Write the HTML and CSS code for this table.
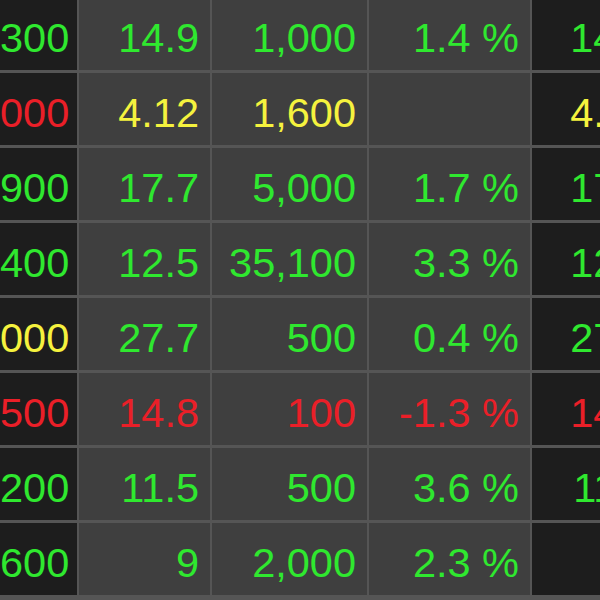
FILE: index.html
```html
<!DOCTYPE html>
<html>
<head>
<meta charset="utf-8">
<link rel="stylesheet" href="styles.css">
</head>
<body>
<div class="board">
  <div class="c dark up">300</div><div class="c up">14.9</div><div class="c up">1,000</div><div class="c up">1.4 %</div><div class="c dark up">14.9</div>
  <div class="c dark down">000</div><div class="c flat">4.12</div><div class="c flat">1,600</div><div class="c"></div><div class="c dark flat">4.12</div>
  <div class="c dark up">900</div><div class="c up">17.7</div><div class="c up">5,000</div><div class="c up">1.7 %</div><div class="c dark up">17.7</div>
  <div class="c dark up">400</div><div class="c up">12.5</div><div class="c up">35,100</div><div class="c up">3.3 %</div><div class="c dark up">12.5</div>
  <div class="c dark flat">000</div><div class="c up">27.7</div><div class="c up">500</div><div class="c up">0.4 %</div><div class="c dark up">27.7</div>
  <div class="c dark down">500</div><div class="c down">14.8</div><div class="c down">100</div><div class="c down">-1.3 %</div><div class="c dark down">14.8</div>
  <div class="c dark up">200</div><div class="c up">11.5</div><div class="c up">500</div><div class="c up">3.6 %</div><div class="c dark up">11.5</div>
  <div class="c dark up">600</div><div class="c up">9</div><div class="c up">2,000</div><div class="c up">2.3 %</div><div class="c dark"></div>
</div>
</body>
</html>
```
FILE: styles.css
```css
html, body {
  margin: 0;
  padding: 0;
  background: #555555;
  overflow: hidden;
  width: 600px;
  height: 600px;
}
.board {
  display: grid;
  grid-template-columns: 77px 131px 155px 161px 130px;
  grid-auto-rows: 72px;
  column-gap: 2px;
  row-gap: 3px;
  margin-top: -2px;
  width: 662px;
  background: #555555;
  font-family: "Liberation Sans", Arial, sans-serif;
  font-size: 41.5px;
}
.c {
  background: #3f3f3f;
  text-align: right;
  padding: 8px 11px 0 0;
  line-height: 64px;
  white-space: nowrap;
  box-sizing: border-box;
}
.dark {
  background: #1d1d1d;
}
.up { color: #2fe82f; }
.down { color: #ea1f28; }
.flat { color: #f5f23e; }
```
